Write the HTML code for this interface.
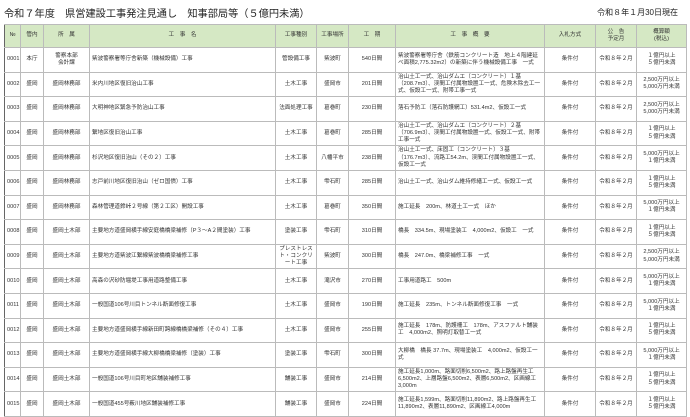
<!DOCTYPE html>
<html><head><meta charset="utf-8"><style>
*{margin:0;padding:0;box-sizing:border-box}
body{width:690px;height:417px;overflow:hidden;background:#fff;font-family:"Liberation Sans","Noto Sans CJK JP",sans-serif;color:#333}
.t1{position:absolute;left:4px;top:5px;font-size:10.2px;color:#222}
.t2{position:absolute;right:12px;top:7px;font-size:8px;color:#222}
table{position:absolute;left:4px;top:24px;width:682px;border-collapse:collapse;table-layout:fixed;font-size:5.6px;line-height:7.2px}
td,th{border:1px solid #bbb;padding:0 2px;vertical-align:middle;overflow:hidden}
th{background:#d5e8c4;font-weight:normal;height:23px;text-align:center;color:#333}
td{height:24.6px}
tr td:first-child,tr th:first-child{border-left:1.5px solid #666}
.c{text-align:center}
</style></head><body>
<div class="t1">令和７年度　県営建設工事発注見通し　知事部局等（５億円未満）</div>
<div class="t2">令和８年１月30日現在</div>
<table>
<colgroup><col style="width:16px"><col style="width:23px"><col style="width:46px"><col style="width:186px"><col style="width:41px"><col style="width:32px"><col style="width:47px"><col style="width:149px"><col style="width:51px"><col style="width:41px"><col style="width:50px"></colgroup>
<tr><th>№</th><th>管内</th><th>所　属</th><th>工　事　名</th><th>工事種別</th><th>工事場所</th><th>工　期</th><th>工　事　概　要</th><th>入札方式</th><th>公　告<br>予定月</th><th>概算額<br>(税込)</th></tr>
<tr><td>0001</td><td class="c">本庁</td><td class="c">警察本部<br>会計課</td><td>紫波警察署等庁舎新築（機械設備）工事</td><td class="c">管設備工事</td><td class="c">紫波町</td><td class="c">540日間</td><td>紫波警察署等庁舎（鉄筋コンクリート造　地上４階建延べ面積2,775.32m2）の新築に伴う機械設備工事　一式</td><td class="c">条件付</td><td class="c">令和８年２月</td><td class="c">１億円以上<br>５億円未満</td></tr>
<tr><td>0002</td><td class="c">盛岡</td><td class="c">盛岡林務部</td><td>米内川地区復旧治山工事</td><td class="c">土木工事</td><td class="c">盛岡市</td><td class="c">201日間</td><td>治山土工一式、治山ダムエ（コンクリート）１基（208.7m3）、渓間工付属物設置工一式、危険木除去工一式、仮設工一式、附帯工事一式</td><td class="c">条件付</td><td class="c">令和８年２月</td><td class="c">2,500万円以上<br>5,000万円未満</td></tr>
<tr><td>0003</td><td class="c">盛岡</td><td class="c">盛岡林務部</td><td>大明神地区緊急予防治山工事</td><td class="c">法面処理工事</td><td class="c">葛巻町</td><td class="c">230日間</td><td>落石予防工（落石防護網工）531.4m2、仮設工一式</td><td class="c">条件付</td><td class="c">令和８年２月</td><td class="c">2,500万円以上<br>5,000万円未満</td></tr>
<tr><td>0004</td><td class="c">盛岡</td><td class="c">盛岡林務部</td><td>繋地区復旧治山工事</td><td class="c">土木工事</td><td class="c">葛巻町</td><td class="c">285日間</td><td>治山土工一式、治山ダムエ（コンクリート）２基（706.9m3）、渓間工付属物設置一式、仮設工一式、附帯工事一式</td><td class="c">条件付</td><td class="c">令和８年２月</td><td class="c">１億円以上<br>５億円未満</td></tr>
<tr><td>0005</td><td class="c">盛岡</td><td class="c">盛岡林務部</td><td>杉沢地区復旧治山（その２）工事</td><td class="c">土木工事</td><td class="c">八幡平市</td><td class="c">238日間</td><td>治山土工一式、床固工（コンクリート）３基（176.7m3）、流路工54.2m、渓間工付属物設置工一式、仮設工一式</td><td class="c">条件付</td><td class="c">令和８年２月</td><td class="c">5,000万円以上<br>１億円未満</td></tr>
<tr><td>0006</td><td class="c">盛岡</td><td class="c">盛岡林務部</td><td>志戸前川地区復旧治山（ゼロ国債）工事</td><td class="c">土木工事</td><td class="c">雫石町</td><td class="c">285日間</td><td>治山土工一式、治山ダム維持修繕工一式、仮設工一式</td><td class="c">条件付</td><td class="c">令和８年２月</td><td class="c">１億円以上<br>５億円未満</td></tr>
<tr><td>0007</td><td class="c">盛岡</td><td class="c">盛岡林務部</td><td>森林管理道鈴峠２号線（第２工区）開設工事</td><td class="c">土木工事</td><td class="c">葛巻町</td><td class="c">350日間</td><td>施工延長　200m、林道土工一式　ほか</td><td class="c">条件付</td><td class="c">令和８年２月</td><td class="c">5,000万円以上<br>１億円未満</td></tr>
<tr><td>0008</td><td class="c">盛岡</td><td class="c">盛岡土木部</td><td>主要地方道盛岡横手線安庭橋橋梁補修（P３～A２間塗装）工事</td><td class="c">塗装工事</td><td class="c">雫石町</td><td class="c">310日間</td><td>橋長　334.5m、現場塗装工　4,000m2、仮設工　一式</td><td class="c">条件付</td><td class="c">令和８年２月</td><td class="c">１億円以上<br>５億円未満</td></tr>
<tr><td>0009</td><td class="c">盛岡</td><td class="c">盛岡土木部</td><td>主要地方道紫波江繋線紫波橋橋梁補修工事</td><td class="c">プレストレスト・コンクリート工事</td><td class="c">紫波町</td><td class="c">300日間</td><td>橋長　247.0m、橋梁補修工事　一式</td><td class="c">条件付</td><td class="c">令和８年２月</td><td class="c">2,500万円以上<br>5,000万円未満</td></tr>
<tr><td>0010</td><td class="c">盛岡</td><td class="c">盛岡土木部</td><td>高森の沢砂防堰堤工事用道路整備工事</td><td class="c">土木工事</td><td class="c">滝沢市</td><td class="c">270日間</td><td>工事用道路工　500m</td><td class="c">条件付</td><td class="c">令和８年２月</td><td class="c">5,000万円以上<br>１億円未満</td></tr>
<tr><td>0011</td><td class="c">盛岡</td><td class="c">盛岡土木部</td><td>一般国道106号川目トンネル断面修復工事</td><td class="c">土木工事</td><td class="c">盛岡市</td><td class="c">190日間</td><td>施工延長　235m、トンネル断面修復工事　一式</td><td class="c">条件付</td><td class="c">令和８年２月</td><td class="c">5,000万円以上<br>１億円未満</td></tr>
<tr><td>0012</td><td class="c">盛岡</td><td class="c">盛岡土木部</td><td>主要地方道盛岡横手線新田町跨線橋橋梁補修（その４）工事</td><td class="c">土木工事</td><td class="c">盛岡市</td><td class="c">255日間</td><td>施工延長　178m、防護柵工　178m、アスファルト舗装工　4,000m2、照明灯取替工一式</td><td class="c">条件付</td><td class="c">令和８年２月</td><td class="c">１億円以上<br>５億円未満</td></tr>
<tr><td>0013</td><td class="c">盛岡</td><td class="c">盛岡土木部</td><td>主要地方道盛岡横手線大柳橋橋梁補修（塗装）工事</td><td class="c">塗装工事</td><td class="c">雫石町</td><td class="c">300日間</td><td>大柳橋　橋長 37.7m、現場塗装工　4,000m2、仮設工一式</td><td class="c">条件付</td><td class="c">令和８年２月</td><td class="c">5,000万円以上<br>１億円未満</td></tr>
<tr><td>0014</td><td class="c">盛岡</td><td class="c">盛岡土木部</td><td>一般国道106号川目町地区舗装補修工事</td><td class="c">舗装工事</td><td class="c">盛岡市</td><td class="c">214日間</td><td>施工延長1,000m、路面切削6,500m2、路上路盤再生工6,500m2、上層路盤6,500m2、表層6,500m2、区画線工3,000m</td><td class="c">条件付</td><td class="c">令和８年２月</td><td class="c">１億円以上<br>５億円未満</td></tr>
<tr><td>0015</td><td class="c">盛岡</td><td class="c">盛岡土木部</td><td>一般国道455号薮川地区舗装補修工事</td><td class="c">舗装工事</td><td class="c">盛岡市</td><td class="c">224日間</td><td>施工延長1,599m、路面切削11,890m2、路上路盤再生工11,890m2、表層11,890m2、区画線工4,000m</td><td class="c">条件付</td><td class="c">令和８年２月</td><td class="c">１億円以上<br>５億円未満</td></tr>
</table>
</body></html>
